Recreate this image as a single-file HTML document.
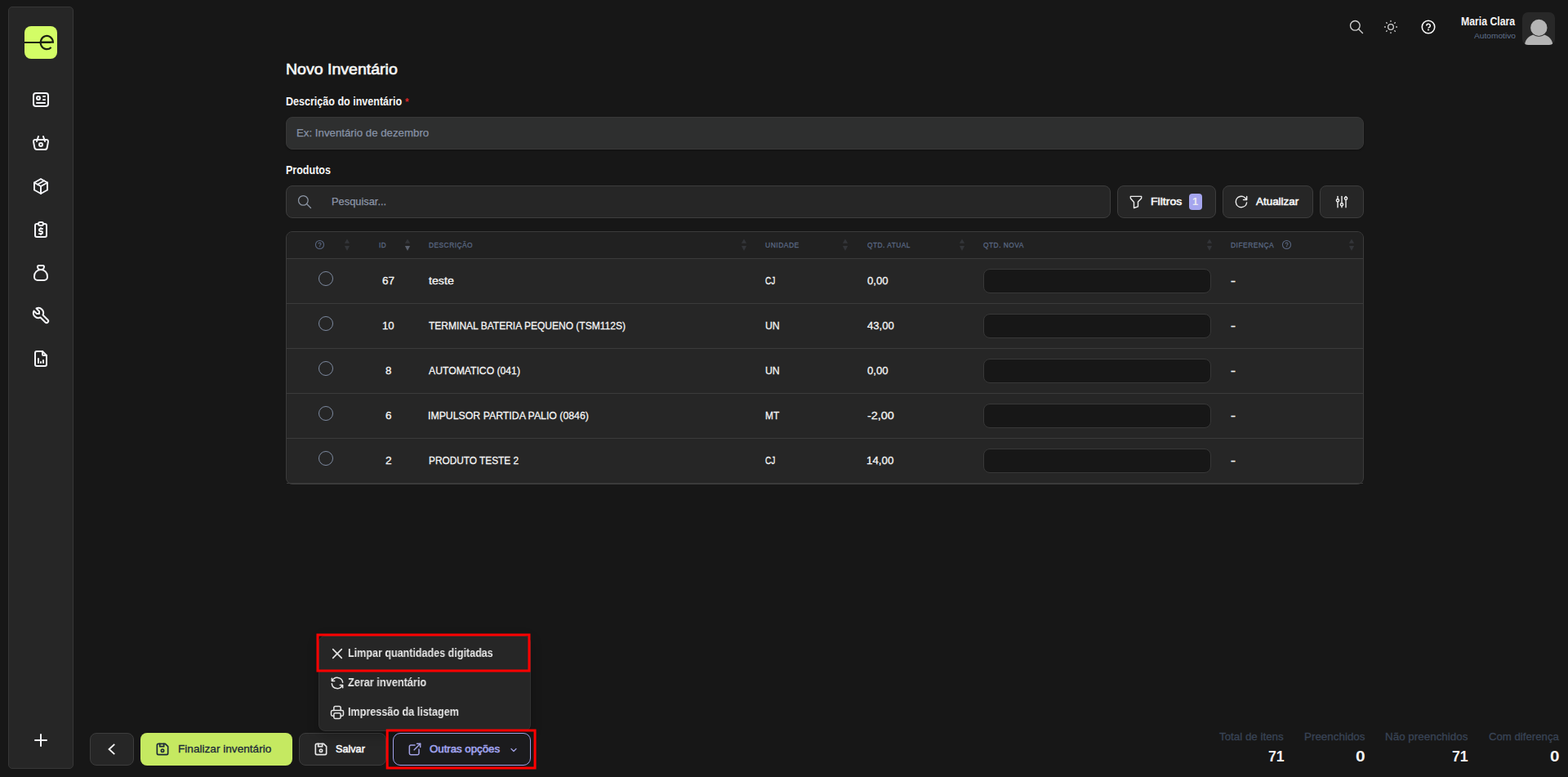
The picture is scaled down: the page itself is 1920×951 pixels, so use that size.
<!DOCTYPE html>
<html lang="pt-BR">
<head>
<meta charset="utf-8">
<title>Novo Inventário</title>
<style>
*{margin:0;padding:0}
html,body{width:1920px;height:951px;overflow:hidden;background:#171717}
body{position:relative;font-family:"Liberation Sans", sans-serif;-webkit-font-smoothing:antialiased}
.g{display:contents}
div,.t,.i{position:absolute}
.t{white-space:nowrap;transform-origin:0 50%;display:block}
</style>
</head>
<body>
<aside class="g sidebar">
<div style="left:10px;top:8px;width:80px;height:933px;background:#262626;border:1px solid #373737;border-radius:5px;box-sizing:border-box"></div>
<div style="left:30px;top:32px;width:40px;height:40px;background:#d3fd66;border-radius:8px;overflow:hidden"><i style="position:absolute;left:0;top:18.6px;width:32px;height:2.2px;background:#1b2112"></i><svg style="position:absolute;left:0;top:0" width="40" height="40" viewBox="0 0 40 40" fill="none" stroke="#1b2112" stroke-width="2.2" stroke-linecap="butt"><path d="M19.9 19.7H34.9A7.6 8.1 0 1 0 32.6 25.9"/></svg></div>
<svg class="i" style="left:38px;top:110px" width="24" height="24" viewBox="0 0 24 24" fill="none" stroke="#f3f4f8" stroke-width="2" stroke-linecap="round" stroke-linejoin="round"><path d="M3 4m0 3a3 3 0 0 1 3 -3h12a3 3 0 0 1 3 3v10a3 3 0 0 1 -3 3h-12a3 3 0 0 1 -3 -3z"/><path d="M9 10m-2 0a2 2 0 1 0 4 0a2 2 0 1 0 -4 0"/><path d="M15 8l2 0"/><path d="M15 12l2 0"/><path d="M7 16l10 0"/></svg>
<svg class="i" style="left:38px;top:163px" width="24" height="24" viewBox="0 0 24 24" fill="none" stroke="#f3f4f8" stroke-width="2" stroke-linecap="round" stroke-linejoin="round"><path d="M10 14a2 2 0 1 0 4 0a2 2 0 0 0 -4 0"/><path d="M5.001 8h13.999a2 2 0 0 1 1.977 2.304l-1.255 7.152a3 3 0 0 1 -2.966 2.544h-9.512a3 3 0 0 1 -2.965 -2.544l-1.255 -7.152a2 2 0 0 1 1.977 -2.304z"/><path d="M17 10l-2 -6"/><path d="M7 10l2 -6"/></svg>
<svg class="i" style="left:38px;top:216px" width="24" height="24" viewBox="0 0 24 24" fill="none" stroke="#f3f4f8" stroke-width="2" stroke-linecap="round" stroke-linejoin="round"><path d="M12 3l8 4.5l0 9l-8 4.5l-8 -4.5l0 -9l8 -4.5"/><path d="M12 12l8 -4.5"/><path d="M12 12l0 9"/><path d="M12 12l-8 -4.5"/><path d="M16 5.25l-8 4.5"/></svg>
<svg class="i" style="left:38px;top:269px" width="24" height="24" viewBox="0 0 24 24" fill="none" stroke="#f3f4f8" stroke-width="2" stroke-linecap="round" stroke-linejoin="round"><path d="M9 5h-2a2 2 0 0 0 -2 2v12a2 2 0 0 0 2 2h10a2 2 0 0 0 2 -2v-12a2 2 0 0 0 -2 -2h-2"/><path d="M9 3m0 2a2 2 0 0 1 2 -2h2a2 2 0 0 1 2 2v0a2 2 0 0 1 -2 2h-2a2 2 0 0 1 -2 -2z"/><path d="M14 11h-2.5a1.5 1.5 0 0 0 0 3h1a1.5 1.5 0 0 1 0 3h-2.5"/><path d="M12 17v1m0 -8v1"/></svg>
<svg class="i" style="left:38px;top:322px" width="24" height="24" viewBox="0 0 24 24" fill="none" stroke="#f3f4f8" stroke-width="2" stroke-linecap="round" stroke-linejoin="round"><path d="M9.5 3h5a1.5 1.5 0 0 1 1.5 1.5a3.5 3.5 0 0 1 -3.5 3.5h-1a3.5 3.5 0 0 1 -3.5 -3.5a1.5 1.5 0 0 1 1.5 -1.5z"/><path d="M4 17v-1a8 8 0 1 1 16 0v1a4 4 0 0 1 -4 4h-8a4 4 0 0 1 -4 -4z"/></svg>
<svg class="i" style="left:38px;top:374px" width="24" height="24" viewBox="0 0 24 24" fill="none" stroke="#f3f4f8" stroke-width="2" stroke-linecap="round" stroke-linejoin="round"><path d="M7 10h3v-3l-3.5 -3.5a6 6 0 0 1 8 8l6 6a2 2 0 0 1 -3 3l-6 -6a6 6 0 0 1 -8 -8l3.5 3.5"/></svg>
<svg class="i" style="left:38px;top:427px" width="24" height="24" viewBox="0 0 24 24" fill="none" stroke="#f3f4f8" stroke-width="2" stroke-linecap="round" stroke-linejoin="round"><path d="M14 3v4a1 1 0 0 0 1 1h4"/><path d="M17 21h-10a2 2 0 0 1 -2 -2v-14a2 2 0 0 1 2 -2h7l5 5v11a2 2 0 0 1 -2 2z"/><path d="M9 17l0 -5"/><path d="M12 17l0 -1"/><path d="M15 17l0 -3"/></svg>
<svg class="i" style="left:38px;top:894px" width="24" height="24" viewBox="0 0 24 24" fill="none" stroke="#f3f4f8" stroke-width="2" stroke-linecap="round" stroke-linejoin="round"><path d="M12 5l0 14"/><path d="M5 12l14 0"/></svg>
</aside><header class="g topbar">
<svg class="i" style="left:1651px;top:23px" width="20" height="20" viewBox="0 0 24 24" fill="none" stroke="#d0d0d0" stroke-width="1.6" stroke-linecap="round" stroke-linejoin="round"><path d="M10 10m-7 0a7 7 0 1 0 14 0a7 7 0 1 0 -14 0"/><path d="M21 21l-6 -6"/></svg>
<svg class="i" style="left:1693px;top:23px" width="20" height="20" viewBox="0 0 24 24" fill="none" stroke="#d0d0d0" stroke-width="1.6" stroke-linecap="round" stroke-linejoin="round"><path d="M12 12m-4 0a4 4 0 1 0 8 0a4 4 0 1 0 -8 0"/><path d="M3 12h1m8 -9v1m8 8h1m-9 8v1m-6.4 -15.4l.7 .7m12.1 -.7l-.7 .7m0 11.4l.7 .7m-12.1 -.7l-.7 .7"/></svg>
<svg class="i" style="left:1739px;top:23px" width="20" height="20" viewBox="0 0 24 24" fill="none" stroke="#fafafa" stroke-width="1.9" stroke-linecap="round" stroke-linejoin="round"><circle cx="12" cy="12" r="9.3"/><path d="M9.3 10.1a2.75 2.6 0 1 1 4.1 2.3c-.9.5-1.3.9-1.3 1.3" stroke-linecap="butt"/><path d="M10.8 16.2h2.5" stroke-linecap="butt"/></svg>
<span id="name" class="t" style="left:1788.54px;top:20.43px;font-size:13.9px;line-height:13.9px;font-weight:700;color:#f5f5f5;transform:scaleX(0.8837);">Maria Clara</span>
<span id="org" class="t" style="left:1804.70px;top:38.70px;font-size:9.8px;line-height:9.8px;font-weight:400;color:#5f6f8c;transform:scaleX(1.0382);">Automotivo</span>
<div style="left:1864px;top:15px;width:40px;height:40px;background:#282828;border-radius:7px;overflow:hidden"><svg width="40" height="40" viewBox="0 0 40 40" style="position:absolute;left:0;top:0"><path d="M3 40C3.6 32 10 26.6 20.2 26.6S36.8 32 37.4 40Z" fill="#b4b4b4"/><circle cx="20.3" cy="18.9" r="10.9" fill="#282828"/><circle cx="20.3" cy="18.9" r="10.2" fill="#b4b4b4"/></svg></div>
</header><main class="g content"><section class="g form">
<span id="title" class="t" style="left:349.70px;top:76.16px;font-size:18.6px;line-height:18.6px;font-weight:400;color:#f5f5f5;-webkit-text-stroke:0.65px #f5f5f5;transform:scaleX(1.0503);">Novo Inventário</span>
<span id="lbl1" class="t" style="left:349.60px;top:118.33px;font-size:13.9px;line-height:13.9px;font-weight:700;color:#f5f5f5;transform:scaleX(0.9020);">Descrição do inventário</span>
<span id="ast" class="t" style="left:496.17px;top:117.50px;font-size:13.7px;line-height:13.7px;font-weight:700;color:#dc2626;transform:scaleX(0.8511);">*</span>
<div style="left:350px;top:143px;width:1320px;height:40px;background:#2e2f2f;border:1px solid #383838;border-radius:8px;box-sizing:border-box;box-shadow:0 1px 2px rgba(0,0,0,.35)"></div>
<span id="ph1" class="t" style="left:362.69px;top:156.04px;font-size:13.3px;line-height:13.3px;font-weight:400;color:#8792a6;-webkit-text-stroke:0.25px #8792a6;transform:scaleX(0.9974);">Ex: Inventário de dezembro</span>
<span id="lbl2" class="t" style="left:349.98px;top:202.23px;font-size:13.9px;line-height:13.9px;font-weight:700;color:#f5f5f5;transform:scaleX(0.9014);">Produtos</span>
<div style="left:350px;top:227px;width:1010px;height:40px;background:#262626;border:1px solid #3d3d3d;border-radius:8px;box-sizing:border-box"></div>
<svg class="i" style="left:363px;top:237px" width="20" height="20" viewBox="0 0 24 24" fill="none" stroke="#8d96a5" stroke-width="1.5" stroke-linecap="round" stroke-linejoin="round"><path d="M10 10m-7 0a7 7 0 1 0 14 0a7 7 0 1 0 -14 0"/><path d="M21 21l-6 -6"/></svg>
<span id="ph2" class="t" style="left:406.37px;top:240.04px;font-size:13.3px;line-height:13.3px;font-weight:400;color:#8d96a8;-webkit-text-stroke:0.25px #8d96a8;transform:scaleX(0.9658);">Pesquisar...</span>
<div style="left:1368px;top:227px;width:121px;height:40px;background:#262626;border:1px solid #3d3d3d;border-radius:8px;box-sizing:border-box"></div>
<svg class="i" style="left:1381px;top:237px" width="20" height="20" viewBox="0 0 24 24" fill="none" stroke="#ececec" stroke-width="1.7" stroke-linecap="round" stroke-linejoin="round"><path d="M4 4h16v2.172a2 2 0 0 1 -.586 1.414l-4.414 4.414v7l-6 2v-8.5l-4.48 -4.928a2 2 0 0 1 -.52 -1.345v-2.227z"/></svg>
<span id="filtros" class="t" style="left:1409.38px;top:239.89px;font-size:13.6px;line-height:13.6px;font-weight:400;color:#f5f5f5;-webkit-text-stroke:0.6px #f5f5f5;transform:scaleX(1.0343);">Filtros</span>
<div style="left:1456px;top:237px;width:16px;height:20px;background:#a5a5ee;border-radius:4px"></div>
<span id="badge" class="t" style="left:1459.53px;top:240.40px;font-size:13px;line-height:13px;font-weight:700;color:#e9e8f0;transform:scaleX(0.9967);">1</span>
<div style="left:1497px;top:227px;width:111px;height:40px;background:#262626;border:1px solid #3d3d3d;border-radius:8px;box-sizing:border-box"></div>
<svg class="i" style="left:1510px;top:237px" width="20" height="20" viewBox="0 0 24 24" fill="none" stroke="#ececec" stroke-width="1.7" stroke-linecap="round" stroke-linejoin="round"><path d="M19.933 13.041a8 8 0 1 1 -9.925 -8.788c3.899 -1 7.935 1.007 9.425 4.747"/><path d="M20 4v5h-5"/></svg>
<span id="atual" class="t" style="left:1538.35px;top:239.89px;font-size:13.6px;line-height:13.6px;font-weight:400;color:#f5f5f5;-webkit-text-stroke:0.6px #f5f5f5;transform:scaleX(0.9872);">Atualizar</span>
<div style="left:1616px;top:227px;width:54px;height:40px;background:#262626;border:1px solid #3d3d3d;border-radius:8px;box-sizing:border-box"></div>
<svg class="i" style="left:1633px;top:237px" width="20" height="20" viewBox="0 0 24 24" fill="none" stroke="#ececec" stroke-width="1.7" stroke-linecap="round" stroke-linejoin="round"><path d="M4 10a2 2 0 1 0 4 0a2 2 0 0 0 -4 0"/><path d="M6 4v4"/><path d="M6 12v8"/><path d="M10 16a2 2 0 1 0 4 0a2 2 0 0 0 -4 0"/><path d="M12 4v10"/><path d="M12 18v2"/><path d="M16 7a2 2 0 1 0 4 0a2 2 0 0 0 -4 0"/><path d="M18 4v1"/><path d="M18 9v11"/></svg>
</section><section class="g products-table">
<div style="left:350px;top:283px;width:1320px;height:310px;background:#262626;border:1px solid #3b3b3b;border-radius:8px;box-sizing:border-box;overflow:hidden"><i style="position:absolute;left:0;top:0;width:1318px;height:32px;background:#212121"></i></div>
<div style="left:351px;top:316px;width:1318px;height:1px;background:#3b3b3b"></div>
<div style="left:351px;top:371px;width:1318px;height:1px;background:#3b3b3b"></div>
<div style="left:351px;top:426px;width:1318px;height:1px;background:#3b3b3b"></div>
<div style="left:351px;top:481px;width:1318px;height:1px;background:#3b3b3b"></div>
<div style="left:351px;top:536px;width:1318px;height:1px;background:#3b3b3b"></div>
<div style="left:351px;top:591px;width:1318px;height:1px;background:#3b3b3b"></div>
<svg class="i" style="left:385px;top:293px" width="13" height="13" viewBox="0 0 24 24" fill="none" stroke="#5a6883" stroke-width="1.9" stroke-linecap="round" stroke-linejoin="round"><circle cx="12" cy="12" r="9.3"/><path d="M9.3 10.1a2.75 2.6 0 1 1 4.1 2.3c-.9.5-1.3.9-1.3 1.3" stroke-linecap="butt"/><path d="M10.8 16.2h2.5" stroke-linecap="butt"/></svg>
<svg class="i" style="left:421px;top:292px" width="8" height="16" viewBox="0 0 8 16"><path d="M4 0.6L7.1 5.7H0.9Z" fill="#333539"/><path d="M4 14.9L7.1 9.1H0.9Z" fill="#333539"/></svg>
<span id="h_id" class="t" style="left:463.68px;top:294.70px;font-size:9.8px;line-height:9.8px;font-weight:400;color:#5a6883;letter-spacing:0.6px;-webkit-text-stroke:0.3px #5a6883;transform:scaleX(0.8328);">ID</span>
<svg class="i" style="left:495px;top:292px" width="8" height="16" viewBox="0 0 8 16"><path d="M4 0.6L7.1 5.7H0.9Z" fill="#333539"/><path d="M4 14.9L7.1 9.1H0.9Z" fill="#5a606c"/></svg>
<span id="h_desc" class="t" style="left:524.87px;top:294.70px;font-size:9.8px;line-height:9.8px;font-weight:400;color:#5a6883;letter-spacing:0.6px;-webkit-text-stroke:0.3px #5a6883;transform:scaleX(0.8485);">DESCRIÇÃO</span>
<svg class="i" style="left:907px;top:292px" width="8" height="16" viewBox="0 0 8 16"><path d="M4 0.6L7.1 5.7H0.9Z" fill="#333539"/><path d="M4 14.9L7.1 9.1H0.9Z" fill="#333539"/></svg>
<span id="h_un" class="t" style="left:937.39px;top:294.70px;font-size:9.8px;line-height:9.8px;font-weight:400;color:#5a6883;letter-spacing:0.6px;-webkit-text-stroke:0.3px #5a6883;transform:scaleX(0.8646);">UNIDADE</span>
<svg class="i" style="left:1031px;top:292px" width="8" height="16" viewBox="0 0 8 16"><path d="M4 0.6L7.1 5.7H0.9Z" fill="#333539"/><path d="M4 14.9L7.1 9.1H0.9Z" fill="#333539"/></svg>
<span id="h_qa" class="t" style="left:1062.46px;top:294.70px;font-size:9.8px;line-height:9.8px;font-weight:400;color:#5a6883;letter-spacing:0.6px;-webkit-text-stroke:0.3px #5a6883;transform:scaleX(0.8487);">QTD. ATUAL</span>
<svg class="i" style="left:1174px;top:292px" width="8" height="16" viewBox="0 0 8 16"><path d="M4 0.6L7.1 5.7H0.9Z" fill="#333539"/><path d="M4 14.9L7.1 9.1H0.9Z" fill="#333539"/></svg>
<span id="h_qn" class="t" style="left:1204.15px;top:294.70px;font-size:9.8px;line-height:9.8px;font-weight:400;color:#5a6883;letter-spacing:0.6px;-webkit-text-stroke:0.3px #5a6883;transform:scaleX(0.8517);">QTD. NOVA</span>
<svg class="i" style="left:1477px;top:292px" width="8" height="16" viewBox="0 0 8 16"><path d="M4 0.6L7.1 5.7H0.9Z" fill="#333539"/><path d="M4 14.9L7.1 9.1H0.9Z" fill="#333539"/></svg>
<span id="h_dif" class="t" style="left:1507.16px;top:294.70px;font-size:9.8px;line-height:9.8px;font-weight:400;color:#5a6883;letter-spacing:0.6px;-webkit-text-stroke:0.3px #5a6883;transform:scaleX(0.8576);">DIFERENÇA</span>
<svg class="i" style="left:1569px;top:293px" width="13" height="13" viewBox="0 0 24 24" fill="none" stroke="#5a6883" stroke-width="1.9" stroke-linecap="round" stroke-linejoin="round"><circle cx="12" cy="12" r="9.3"/><path d="M9.3 10.1a2.75 2.6 0 1 1 4.1 2.3c-.9.5-1.3.9-1.3 1.3" stroke-linecap="butt"/><path d="M10.8 16.2h2.5" stroke-linecap="butt"/></svg>
<svg class="i" style="left:1651px;top:292px" width="8" height="16" viewBox="0 0 8 16"><path d="M4 0.6L7.1 5.7H0.9Z" fill="#333539"/><path d="M4 14.9L7.1 9.1H0.9Z" fill="#333539"/></svg>
<div style="left:390px;top:332px;width:18px;height:18px;border:1px solid #7d8aa0;border-radius:50%;box-sizing:border-box"></div>
<span id="r0id" class="t" style="left:468.12px;top:336.83px;font-size:13.2px;line-height:13.2px;font-weight:400;color:#f5f5f5;-webkit-text-stroke:0.3px #f5f5f5;transform:scaleX(1.0283);">67</span>
<span id="r0d" class="t" style="left:524.73px;top:336.83px;font-size:13.2px;line-height:13.2px;font-weight:400;color:#f5f5f5;-webkit-text-stroke:0.3px #f5f5f5;transform:scaleX(1.0783);">teste</span>
<span id="r0u" class="t" style="left:936.88px;top:336.83px;font-size:13.2px;line-height:13.2px;font-weight:400;color:#f5f5f5;-webkit-text-stroke:0.3px #f5f5f5;transform:scaleX(0.7650);">CJ</span>
<span id="r0q" class="t" style="left:1061.50px;top:336.83px;font-size:13.2px;line-height:13.2px;font-weight:400;color:#f5f5f5;-webkit-text-stroke:0.3px #f5f5f5;transform:scaleX(0.9962);">0,00</span>
<div style="left:1204px;top:329px;width:279px;height:30px;background:#171717;border:1px solid #383838;border-radius:8px;box-sizing:border-box"></div>
<span id="r0x" class="t" style="left:1507.22px;top:336.83px;font-size:13.2px;line-height:13.2px;font-weight:400;color:#f5f5f5;-webkit-text-stroke:0.5px #f5f5f5;transform:scaleX(1.3420);">-</span>
<div style="left:390px;top:387px;width:18px;height:18px;border:1px solid #7d8aa0;border-radius:50%;box-sizing:border-box"></div>
<span id="r1id" class="t" style="left:468.08px;top:391.83px;font-size:13.2px;line-height:13.2px;font-weight:400;color:#f5f5f5;-webkit-text-stroke:0.3px #f5f5f5;transform:scaleX(1.0033);">10</span>
<span id="r1d" class="t" style="left:524.77px;top:391.83px;font-size:13.2px;line-height:13.2px;font-weight:400;color:#f5f5f5;-webkit-text-stroke:0.3px #f5f5f5;transform:scaleX(0.9116);">TERMINAL BATERIA PEQUENO (TSM112S)</span>
<span id="r1u" class="t" style="left:936.77px;top:391.83px;font-size:13.2px;line-height:13.2px;font-weight:400;color:#f5f5f5;-webkit-text-stroke:0.3px #f5f5f5;transform:scaleX(0.9302);">UN</span>
<span id="r1q" class="t" style="left:1062.02px;top:391.83px;font-size:13.2px;line-height:13.2px;font-weight:400;color:#f5f5f5;-webkit-text-stroke:0.3px #f5f5f5;transform:scaleX(0.9947);">43,00</span>
<div style="left:1204px;top:384px;width:279px;height:30px;background:#171717;border:1px solid #383838;border-radius:8px;box-sizing:border-box"></div>
<span id="r1x" class="t" style="left:1507.22px;top:391.83px;font-size:13.2px;line-height:13.2px;font-weight:400;color:#f5f5f5;-webkit-text-stroke:0.5px #f5f5f5;transform:scaleX(1.3420);">-</span>
<div style="left:390px;top:442px;width:18px;height:18px;border:1px solid #7d8aa0;border-radius:50%;box-sizing:border-box"></div>
<span id="r2id" class="t" style="left:471.82px;top:446.83px;font-size:13.2px;line-height:13.2px;font-weight:400;color:#f5f5f5;-webkit-text-stroke:0.3px #f5f5f5;transform:scaleX(1.0089);">8</span>
<span id="r2d" class="t" style="left:524.74px;top:446.83px;font-size:13.2px;line-height:13.2px;font-weight:400;color:#f5f5f5;-webkit-text-stroke:0.3px #f5f5f5;transform:scaleX(0.9241);">AUTOMATICO (041)</span>
<span id="r2u" class="t" style="left:936.77px;top:446.83px;font-size:13.2px;line-height:13.2px;font-weight:400;color:#f5f5f5;-webkit-text-stroke:0.3px #f5f5f5;transform:scaleX(0.9302);">UN</span>
<span id="r2q" class="t" style="left:1061.50px;top:446.83px;font-size:13.2px;line-height:13.2px;font-weight:400;color:#f5f5f5;-webkit-text-stroke:0.3px #f5f5f5;transform:scaleX(0.9962);">0,00</span>
<div style="left:1204px;top:439px;width:279px;height:30px;background:#171717;border:1px solid #383838;border-radius:8px;box-sizing:border-box"></div>
<span id="r2x" class="t" style="left:1507.22px;top:446.83px;font-size:13.2px;line-height:13.2px;font-weight:400;color:#f5f5f5;-webkit-text-stroke:0.5px #f5f5f5;transform:scaleX(1.3420);">-</span>
<div style="left:390px;top:497px;width:18px;height:18px;border:1px solid #7d8aa0;border-radius:50%;box-sizing:border-box"></div>
<span id="r3id" class="t" style="left:471.82px;top:501.83px;font-size:13.2px;line-height:13.2px;font-weight:400;color:#f5f5f5;-webkit-text-stroke:0.3px #f5f5f5;transform:scaleX(1.0219);">6</span>
<span id="r3d" class="t" style="left:524.29px;top:501.83px;font-size:13.2px;line-height:13.2px;font-weight:400;color:#f5f5f5;-webkit-text-stroke:0.3px #f5f5f5;transform:scaleX(0.9328);">IMPULSOR PARTIDA PALIO (0846)</span>
<span id="r3u" class="t" style="left:936.83px;top:501.83px;font-size:13.2px;line-height:13.2px;font-weight:400;color:#f5f5f5;-webkit-text-stroke:0.3px #f5f5f5;transform:scaleX(0.8990);">MT</span>
<span id="r3q" class="t" style="left:1062.05px;top:501.83px;font-size:13.2px;line-height:13.2px;font-weight:400;color:#f5f5f5;-webkit-text-stroke:0.3px #f5f5f5;transform:scaleX(1.0909);">-2,00</span>
<div style="left:1204px;top:494px;width:279px;height:30px;background:#171717;border:1px solid #383838;border-radius:8px;box-sizing:border-box"></div>
<span id="r3x" class="t" style="left:1507.22px;top:501.83px;font-size:13.2px;line-height:13.2px;font-weight:400;color:#f5f5f5;-webkit-text-stroke:0.5px #f5f5f5;transform:scaleX(1.3420);">-</span>
<div style="left:390px;top:552px;width:18px;height:18px;border:1px solid #7d8aa0;border-radius:50%;box-sizing:border-box"></div>
<span id="r4id" class="t" style="left:472.44px;top:556.83px;font-size:13.2px;line-height:13.2px;font-weight:400;color:#f5f5f5;-webkit-text-stroke:0.3px #f5f5f5;transform:scaleX(1.0420);">2</span>
<span id="r4d" class="t" style="left:524.69px;top:556.83px;font-size:13.2px;line-height:13.2px;font-weight:400;color:#f5f5f5;-webkit-text-stroke:0.3px #f5f5f5;transform:scaleX(0.8977);">PRODUTO TESTE 2</span>
<span id="r4u" class="t" style="left:936.88px;top:556.83px;font-size:13.2px;line-height:13.2px;font-weight:400;color:#f5f5f5;-webkit-text-stroke:0.3px #f5f5f5;transform:scaleX(0.7650);">CJ</span>
<span id="r4q" class="t" style="left:1060.58px;top:556.83px;font-size:13.2px;line-height:13.2px;font-weight:400;color:#f5f5f5;-webkit-text-stroke:0.3px #f5f5f5;transform:scaleX(1.0083);">14,00</span>
<div style="left:1204px;top:549px;width:279px;height:30px;background:#171717;border:1px solid #383838;border-radius:8px;box-sizing:border-box"></div>
<span id="r4x" class="t" style="left:1507.22px;top:556.83px;font-size:13.2px;line-height:13.2px;font-weight:400;color:#f5f5f5;-webkit-text-stroke:0.5px #f5f5f5;transform:scaleX(1.3420);">-</span>
</section></main><footer class="g actions">
<div style="left:110px;top:897px;width:54px;height:40px;background:#262626;border:1px solid #3d3d3d;border-radius:8px;box-sizing:border-box"></div>
<svg class="i" style="left:127px;top:907px" width="20" height="20" viewBox="0 0 24 24" fill="none" stroke="#f4f4f4" stroke-width="2.3" stroke-linecap="round" stroke-linejoin="round"><path d="M15.9 4.6L7.9 12L15.9 19.4" stroke-linecap="butt" stroke-linejoin="miter"/></svg>
<div style="left:172px;top:897px;width:186px;height:40px;background:#c5e961;border-radius:8px"></div>
<svg class="i" style="left:189px;top:907px" width="20" height="20" viewBox="0 0 24 24" fill="none" stroke="#1c2a38" stroke-width="2" stroke-linecap="round" stroke-linejoin="round"><path d="M6 4h10l4 4v10a2 2 0 0 1 -2 2h-12a2 2 0 0 1 -2 -2v-12a2 2 0 0 1 2 -2"/><path d="M12 14m-2 0a2 2 0 1 0 4 0a2 2 0 1 0 -4 0"/><path d="M14 4l0 4l-6 0l0 -4"/></svg>
<span id="fin" class="t" style="left:217.57px;top:910.19px;font-size:13.6px;line-height:13.6px;font-weight:400;color:#1c2a38;-webkit-text-stroke:0.3px #1c2a38;transform:scaleX(1.0017);">Finalizar inventário</span>
<div style="left:366px;top:897px;width:106.5px;height:40px;background:#262626;border:1px solid #3d3d3d;border-radius:8px;box-sizing:border-box"></div>
<svg class="i" style="left:383px;top:907px" width="20" height="20" viewBox="0 0 24 24" fill="none" stroke="#e6e6e6" stroke-width="2" stroke-linecap="round" stroke-linejoin="round"><path d="M6 4h10l4 4v10a2 2 0 0 1 -2 2h-12a2 2 0 0 1 -2 -2v-12a2 2 0 0 1 2 -2"/><path d="M12 14m-2 0a2 2 0 1 0 4 0a2 2 0 1 0 -4 0"/><path d="M14 4l0 4l-6 0l0 -4"/></svg>
<span id="salvar" class="t" style="left:410.68px;top:910.29px;font-size:13.6px;line-height:13.6px;font-weight:400;color:#f5f5f5;-webkit-text-stroke:0.6px #f5f5f5;transform:scaleX(0.9302);">Salvar</span>
<nav class="g menu">
<div style="left:390px;top:778px;width:260px;height:117px;background:#262626;border:1px solid #323232;border-radius:8px;box-sizing:border-box;box-shadow:0 4px 14px rgba(0,0,0,.25)"></div>
<svg class="i" style="left:402px;top:789px" width="22" height="22" viewBox="0 0 24 24" fill="none" stroke="#e6e6e6" stroke-width="1.75" stroke-linecap="round" stroke-linejoin="round"><path d="M17.8 6.2L6.2 17.8"/><path d="M6.2 6.2L17.8 17.8"/></svg>
<span id="m1" class="t" style="left:426.06px;top:792.63px;font-size:13.9px;line-height:13.9px;font-weight:700;color:#e6e6e6;transform:scaleX(0.9028);will-change:transform;">Limpar quantidades digitadas</span>
<svg class="i" style="left:403px;top:826px" width="20" height="20" viewBox="0 0 24 24" fill="none" stroke="#e6e6e6" stroke-width="1.8" stroke-linecap="round" stroke-linejoin="round"><path d="M20 11a8.1 8.1 0 0 0 -15.5 -2m-.5 -4v4h4"/><path d="M4 13a8.1 8.1 0 0 0 15.5 2m.5 4v-4h-4"/></svg>
<span id="m2" class="t" style="left:425.76px;top:829.43px;font-size:13.9px;line-height:13.9px;font-weight:700;color:#e6e6e6;transform:scaleX(0.9158);will-change:transform;">Zerar inventário</span>
<svg class="i" style="left:403px;top:862px" width="20" height="20" viewBox="0 0 24 24" fill="none" stroke="#e6e6e6" stroke-width="1.8" stroke-linecap="round" stroke-linejoin="round"><path d="M17 17h2a2 2 0 0 0 2 -2v-4a2 2 0 0 0 -2 -2h-14a2 2 0 0 0 -2 2v4a2 2 0 0 0 2 2h2"/><path d="M17 9v-4a2 2 0 0 0 -2 -2h-6a2 2 0 0 0 -2 2v4"/><path d="M7 13m0 2a2 2 0 0 1 2 -2h6a2 2 0 0 1 2 2v4a2 2 0 0 1 -2 2h-6a2 2 0 0 1 -2 -2z"/></svg>
<span id="m3" class="t" style="left:426.05px;top:864.73px;font-size:13.9px;line-height:13.9px;font-weight:700;color:#e6e6e6;transform:scaleX(0.9072);will-change:transform;">Impressão da listagem</span>
</nav>
<div style="left:481px;top:897px;width:169px;height:40px;background:#1b1b1d;border:1px solid #a0a0ea;border-radius:9px;box-sizing:border-box"></div>
<svg class="i" style="left:498px;top:907px" width="20" height="20" viewBox="0 0 24 24" fill="none" stroke="#a3a3e6" stroke-width="1.8" stroke-linecap="round" stroke-linejoin="round"><path d="M12 6h-6a2 2 0 0 0 -2 2v10a2 2 0 0 0 2 2h10a2 2 0 0 0 2 -2v-6"/><path d="M11 13l9 -9"/><path d="M15 4h5v5"/></svg>
<span id="outras" class="t" style="left:526.11px;top:910.29px;font-size:13.6px;line-height:13.6px;font-weight:400;color:#a1a3ee;-webkit-text-stroke:0.6px #a1a3ee;transform:scaleX(0.9729);">Outras opções</span>
<svg class="i" style="left:623px;top:912px" width="12" height="12" viewBox="0 0 24 24" fill="none" stroke="#a3a3e6" stroke-width="2.4" stroke-linecap="round" stroke-linejoin="round"><path d="M6 9l6 6l6 -6"/></svg>
<svg class="i" style="left:385px;top:773px" width="268" height="53" viewBox="0 0 268 53"><rect x="4.00" y="4.00" width="259.00" height="44.00" fill="none" stroke="#ff0000" stroke-width="3.0"/></svg>
<svg class="i" style="left:470px;top:890px" width="189" height="55" viewBox="0 0 189 55"><rect x="4.20" y="4.00" width="180.85" height="46.00" fill="none" stroke="#ff0000" stroke-width="3.0"/></svg>
<section class="g stats">
<span id="s1l" class="t" style="left:1493.07px;top:894.74px;font-size:13.6px;line-height:13.6px;font-weight:400;color:#394456;-webkit-text-stroke:0.3px #394456;transform:scaleX(0.9819);">Total de itens</span>
<span id="s1v" class="t" style="left:1552.79px;top:916.59px;font-size:18.2px;line-height:18.2px;font-weight:700;color:#f5f5f5;transform:scaleX(0.9727);">71</span>
<span id="s2l" class="t" style="left:1596.54px;top:894.74px;font-size:13.6px;line-height:13.6px;font-weight:400;color:#394456;-webkit-text-stroke:0.3px #394456;transform:scaleX(0.9861);">Preenchidos</span>
<span id="s2v" class="t" style="left:1659.70px;top:916.59px;font-size:18.2px;line-height:18.2px;font-weight:700;color:#f5f5f5;transform:scaleX(1.1471);">0</span>
<span id="s3l" class="t" style="left:1696.01px;top:894.74px;font-size:13.6px;line-height:13.6px;font-weight:400;color:#394456;-webkit-text-stroke:0.3px #394456;transform:scaleX(0.9868);">Não preenchidos</span>
<span id="s3v" class="t" style="left:1777.79px;top:916.59px;font-size:18.2px;line-height:18.2px;font-weight:700;color:#f5f5f5;transform:scaleX(0.9727);">71</span>
<span id="s4l" class="t" style="left:1822.62px;top:894.74px;font-size:13.6px;line-height:13.6px;font-weight:400;color:#394456;-webkit-text-stroke:0.3px #394456;transform:scaleX(0.9709);">Com diferença</span>
<span id="s4v" class="t" style="left:1898.10px;top:916.59px;font-size:18.2px;line-height:18.2px;font-weight:700;color:#f5f5f5;transform:scaleX(1.1380);">0</span>
</section></footer>
</body>
</html>
